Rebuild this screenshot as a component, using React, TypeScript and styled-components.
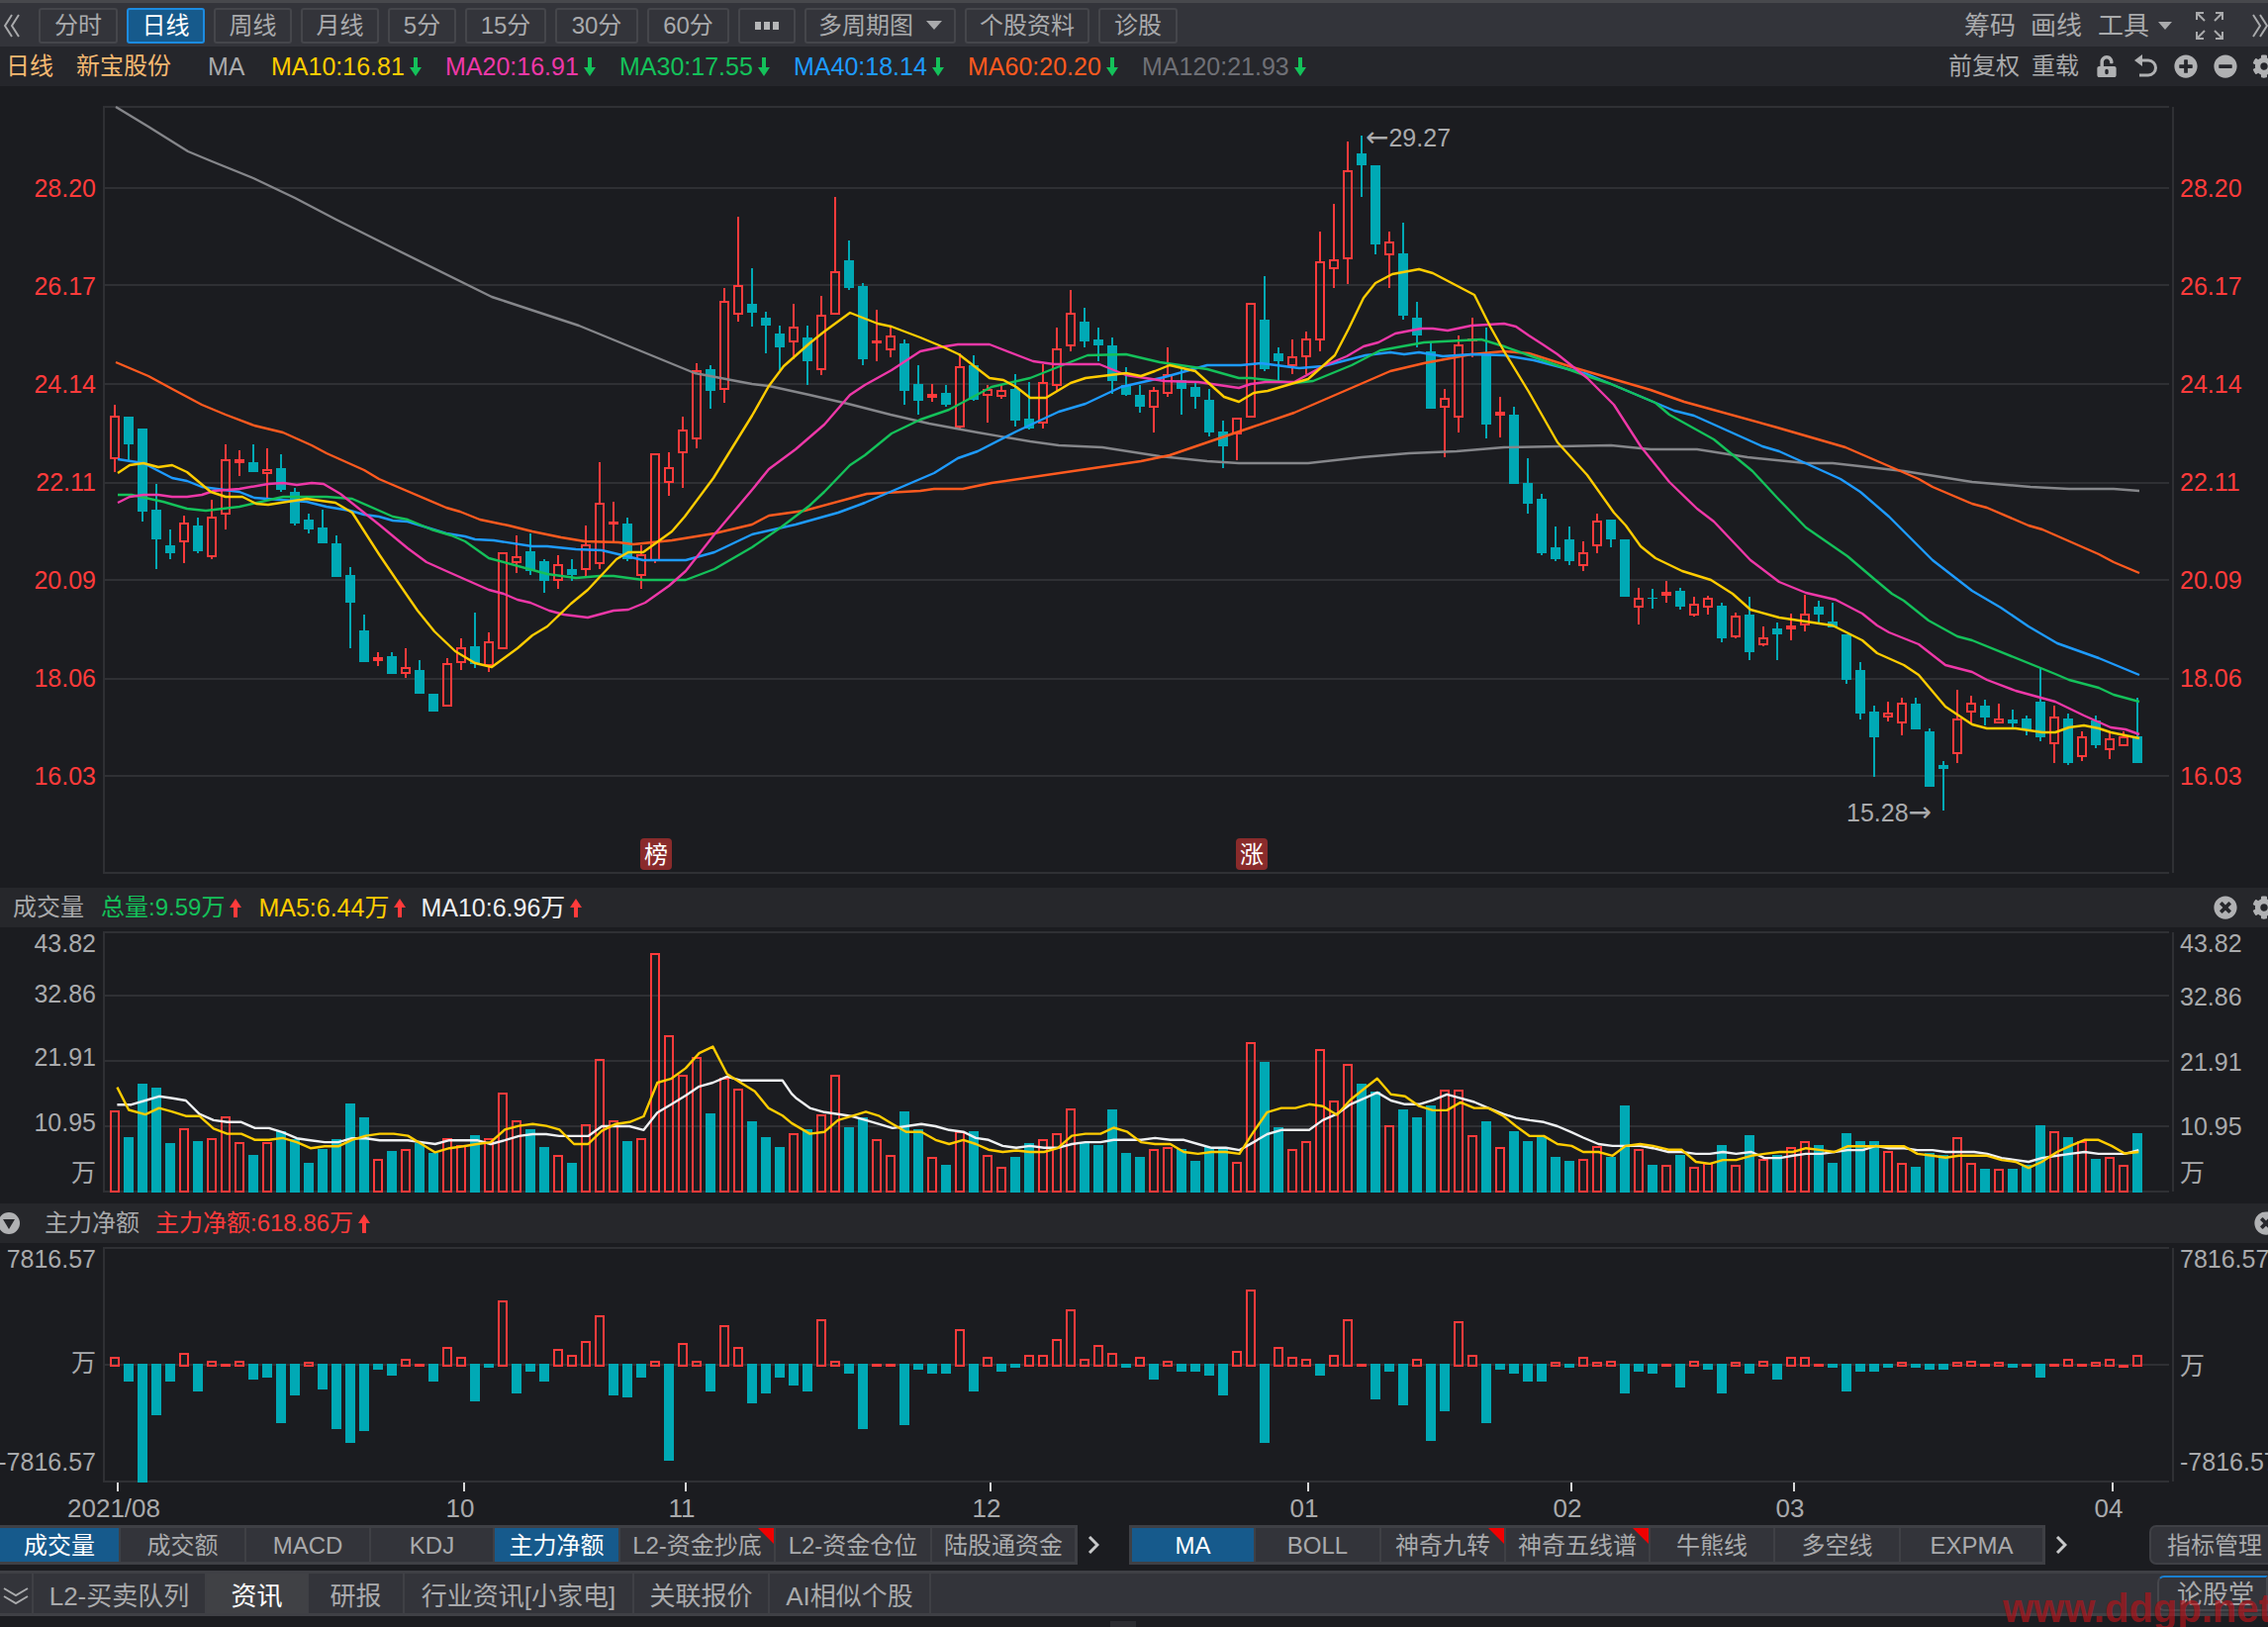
import React from "react";
import styled, { createGlobalStyle } from "styled-components";
import { FaCog, FaMinusCircle, FaPlusCircle, FaTimesCircle, FaUnlockAlt } from "react-icons/fa";

const BG = "#1b1c20";
const BAR = "#33343a";
const EDGE = "#3f4045";
const GRID = "#2f3034";
const TEXT = "#a9aaac";
const RED = "#ff3b3b";
const TEAL = "#00a9b5";
const GREEN = "#14c15a";
const YELLOW = "#ffcc00";
const FONT = `"Liberation Sans", "Noto Sans CJK SC", sans-serif`;

const GlobalStyle = createGlobalStyle`
  html, body {
    margin: 0;
    background: ${BG};
    overflow: hidden;
  }
`;

const Page = styled.div`
  position: relative;
  width: 2292px;
  height: 1644px;
  overflow: hidden;
  background: ${BG};
  color: ${TEXT};
  font-family: ${FONT};
  font-size: 24px;
  line-height: 28px;
`;

const Toolbar = styled.div`
  box-sizing: border-box;
  display: flex;
  align-items: center;
  height: 47px;
  padding: 1px 0 0 4px;
  background: ${BAR};
  border-top: 3px solid #47484c;
`;

const BackIcon = styled.svg<{ $flip?: boolean }>`
  width: 16px;
  height: 24px;
  margin-right: ${(p) => (p.$flip ? 0 : 19)}px;
  flex-shrink: 0;
`;

const ToolGroup = styled.div`
  display: flex;
  gap: 9px;
`;

const ToolButton = styled.div<{ $w: number; $active?: boolean }>`
  box-sizing: border-box;
  display: flex;
  align-items: center;
  justify-content: center;
  gap: 13px;
  width: ${(p) => p.$w}px;
  height: 36px;
  border: 2px solid ${(p) => (p.$active ? "#1c8be0" : "#45464b")};
  border-radius: 3px;
  background: ${(p) => (p.$active ? "#165a8c" : "transparent")};
  color: ${(p) => (p.$active ? "#ffffff" : TEXT)};
`;

const Caret = styled.span<{ $small?: boolean }>`
  width: 0;
  height: 0;
  border-left: ${(p) => (p.$small ? 7 : 8)}px solid transparent;
  border-right: ${(p) => (p.$small ? 7 : 8)}px solid transparent;
  border-top: ${(p) => (p.$small ? 8 : 9)}px solid ${TEXT};
`;

const Dots = styled.span`
  display: flex;
  gap: 3px;
  & > i {
    width: 6px;
    height: 8px;
    background: #b5b6b8;
  }
`;

const RightCluster = styled.div<{ $over?: number }>`
  display: flex;
  align-items: center;
  margin-left: auto;
  margin-right: ${(p) => -(p.$over || 0)}px;
`;

const ClusterItem = styled.span<{ $left: number; $large?: boolean }>`
  display: flex;
  align-items: center;
  flex-shrink: 0;
  margin-left: ${(p) => p.$left}px;
  font-size: ${(p) => (p.$large ? 26 : 24)}px;
`;

const InfoBar = styled.div`
  display: flex;
  align-items: center;
  height: 40px;
  padding-left: 6px;
  background: #25262b;
  overflow: hidden;
`;

const InfoLabel = styled.span<{ $color?: string; $w: number; $latin?: boolean }>`
  width: ${(p) => p.$w}px;
  flex-shrink: 0;
  color: ${(p) => p.$color || TEXT};
  font-size: ${(p) => (p.$latin ? 25 : 24)}px;
`;

const MaItem = styled.span<{ $color: string }>`
  display: flex;
  align-items: center;
  gap: 5px;
  width: 176px;
  flex-shrink: 0;
  font-size: 25px;
  color: ${(p) => p.$color};
`;

const ArrowIcon = styled.svg`
  width: 12px;
  height: 19px;
  flex-shrink: 0;
`;

const Panel = styled.div<{ $h: number }>`
  display: grid;
  grid-template-columns: 104px 2096px 92px;
  height: ${(p) => p.$h}px;
`;

const ChartSvg = styled.svg`
  display: block;
  font-family: ${FONT};
`;

const Axis = styled.div<{ $top: number; $left?: boolean; $red?: boolean }>`
  display: flex;
  flex-direction: column;
  align-items: ${(p) => (p.$left ? "flex-end" : "flex-start")};
  padding-top: ${(p) => p.$top}px;
  padding-right: ${(p) => (p.$left ? 7 : 0)}px;
  padding-left: ${(p) => (p.$left ? 0 : 3)}px;
  font-size: 25px;
  color: ${(p) => (p.$red ? RED : TEXT)};
  white-space: nowrap;
`;

const Tick = styled.div<{ $h: number }>`
  height: ${(p) => p.$h}px;
`;

const SubHeader = styled.div`
  display: flex;
  align-items: center;
  height: 40px;
  background: #26272b;
  overflow: hidden;
`;

const SubTitle = styled.span<{ $left: number }>`
  margin-left: ${(p) => p.$left}px;
  flex-shrink: 0;
`;

const Legend = styled.span<{ $color: string; $left: number; $latin?: boolean }>`
  display: flex;
  align-items: center;
  gap: 5px;
  flex-shrink: 0;
  margin-left: ${(p) => p.$left}px;
  font-size: ${(p) => (p.$latin ? 25 : 24)}px;
  color: ${(p) => p.$color};
`;

const CircleIcon = styled.svg`
  width: 22px;
  height: 22px;
  margin-left: -2px;
  flex-shrink: 0;
`;

const DateAxis = styled.div`
  display: flex;
  height: 43px;
  padding-left: 118px;
  font-size: 26px;
`;

const DateCell = styled.div<{ $w: number }>`
  flex: 0 0 ${(p) => p.$w}px;
  &::before {
    content: "";
    display: block;
    width: 2px;
    height: 9px;
    background: #d8d8d8;
  }
`;

const DateLabel = styled.span`
  display: inline-block;
  margin-top: 3px;
  white-space: nowrap;
  transform: translateX(calc(-50% - 3px));
`;

const TabRow = styled.div`
  display: flex;
  align-items: stretch;
  height: 40px;
  margin-bottom: 6px;
`;

const TabGroup = styled.div<{ $first?: boolean }>`
  display: flex;
  flex-shrink: 0;
  border: 3px solid ${EDGE};
  ${(p) => (p.$first ? "border-left: none;" : "margin-left: 30px;")}
`;

const Tab = styled.div<{ $w: number; $active?: boolean; $flag?: boolean }>`
  position: relative;
  box-sizing: border-box;
  display: flex;
  align-items: center;
  justify-content: center;
  width: ${(p) => p.$w}px;
  padding-top: 2px;
  background: ${(p) => (p.$active ? "#165a8c" : BAR)};
  color: ${(p) => (p.$active ? "#ffffff" : TEXT)};
  border-right: 2px solid ${EDGE};
  white-space: nowrap;
  &:last-child {
    border-right: none;
  }
  ${(p) =>
    p.$flag &&
    `&::after {
      content: "";
      position: absolute;
      top: 0;
      right: 0;
      width: 16px;
      height: 16px;
      background: #f00000;
      clip-path: polygon(0 0, 100% 0, 100% 100%);
    }`}
`;

const ChevronIcon = styled.svg`
  align-self: center;
  width: 12px;
  height: 18px;
  margin-left: 10px;
  flex-shrink: 0;
`;

const ManageButton = styled.div`
  box-sizing: border-box;
  display: flex;
  align-items: center;
  width: 130px;
  margin-left: 83px;
  padding: 2px 0 0 16px;
  flex-shrink: 0;
  background: ${BAR};
  border: 2px solid ${EDGE};
  border-radius: 7px 0 0 7px;
`;

const BottomBar = styled.div`
  box-sizing: border-box;
  display: flex;
  align-items: stretch;
  height: 46px;
  background: ${BAR};
  border-top: 3px solid ${EDGE};
  border-bottom: 3px solid ${EDGE};
  font-size: 26px;
`;

const BottomTab = styled.div<{ $w: number; $active?: boolean }>`
  box-sizing: border-box;
  display: flex;
  align-items: center;
  justify-content: center;
  width: ${(p) => p.$w}px;
  padding-top: 5px;
  background: ${(p) => (p.$active ? "#404145" : "transparent")};
  color: ${(p) => (p.$active ? "#ffffff" : TEXT)};
  border-right: 2px solid ${EDGE};
  white-space: nowrap;
`;

const CollapseIcon = styled.svg`
  width: 26px;
  height: 20px;
`;

const ForumButton = styled.div`
  box-sizing: border-box;
  display: flex;
  align-items: center;
  align-self: center;
  width: 112px;
  height: 36px;
  margin-left: auto;
  padding: 2px 0 0 18px;
  flex-shrink: 0;
  border: 2px solid #46474c;
  border-top-color: #1a7fd0;
  border-radius: 7px 0 0 7px;
`;

const Footer = styled.div`
  display: flex;
  height: 11px;
  padding: 5px 0 0 1122px;
  box-sizing: border-box;
  & > i {
    width: 26px;
    background: #2b2c30;
  }
`;

const Watermark = styled.div`
  position: absolute;
  left: 2024px;
  top: 1603px;
  font-family: "Liberation Sans", sans-serif;
  font-size: 40px;
  line-height: 44px;
  font-weight: 700;
  color: rgba(176, 20, 26, 0.7);
  white-space: nowrap;
`;

// candles: [up, bodyTop, bodyBottom, wickTop, wickBottom], read off crops at the given scale
type Bar = number[];

const scaleBars = (rows: Bar[], y0: number, sy: number): Bar[] =>
  rows.map(([up, ...ys]) => [up, ...ys.map((y) => Math.round(y0 + y / sy))]);

const CANDLES: Bar[] = [
  ...scaleBars(
    [
      [1, 119, 252, 88, 290], [0, 124, 207, 124, 255], [0, 160, 411, 160, 440], [0, 406, 495, 328, 585],
      [0, 514, 537, 465, 555], [1, 443, 505, 424, 566], [0, 454, 531, 430, 537], [1, 425, 548, 376, 554],
      [1, 251, 421, 208, 465], [1, 251, 265, 226, 303], [0, 262, 290, 208, 290], [1, 281, 296, 220, 370],
      [0, 280, 345, 238, 351], [0, 352, 447, 340, 452], [0, 436, 465, 418, 476], [0, 460, 507, 406, 507],
      [0, 508, 609, 484, 609], [0, 604, 687, 580, 825], [0, 772, 867, 724, 867], [1, 851, 865, 838, 878],
      [0, 850, 903, 838, 903], [1, 881, 902, 826, 914], [0, 892, 963, 862, 963], [0, 964, 1017, 964, 1017],
      [1, 869, 1003, 856, 1003], [1, 821, 871, 796, 890], [0, 820, 873, 718, 885], [1, 803, 880, 778, 896],
      [1, 533, 829, 533, 829], [1, 545, 566, 484, 596], [0, 532, 590, 476, 602], [0, 562, 621, 556, 656],
      [1, 569, 620, 544, 644], [0, 586, 603, 556, 620], [1, 509, 589, 454, 608], [1, 383, 571, 262, 584],
      [1, 440, 443, 382, 502], [0, 448, 555, 430, 560], [1, 539, 607, 512, 644], [1, 233, 560, 233, 566],
      [1, 275, 325, 232, 362], [1, 161, 235, 124, 338],
    ],
    380,
    3,
  ),
  [1, 374, 444, 367, 453],
  [0, 373, 395, 369, 413],
  [1, 304, 394, 291, 407],
  [1, 288, 318, 219, 325],
  [0, 307, 316, 271, 330],
  ...scaleBars(
    [
      [0, 433, 449, 421, 503], [0, 465, 492, 449, 538], [1, 451, 483, 406, 515], [0, 472, 519, 449, 566],
      [1, 427, 538, 390, 546], [1, 341, 427, 195, 427], [0, 320, 374, 280, 378], [0, 370, 515, 364, 527],
      [1, 478, 482, 418, 519], [1, 469, 498, 453, 511], [0, 484, 578, 476, 606], [0, 564, 598, 527, 625],
      [1, 584, 592, 564, 600], [0, 582, 606, 566, 610], [1, 529, 650, 504, 652], [0, 527, 596, 508, 598],
      [1, 575, 588, 566, 640], [1, 576, 589, 566, 594], [0, 574, 637, 544, 648], [0, 633, 653, 560, 655],
      [1, 561, 643, 525, 652], [1, 494, 568, 453, 580], [1, 423, 490, 379, 500], [0, 441, 480, 414, 492],
      [0, 476, 488, 453, 519], [0, 488, 558, 472, 585], [0, 567, 586, 531, 588], [0, 586, 610, 566, 621],
      [1, 576, 611, 570, 660], [1, 545, 585, 492, 590], [0, 556, 574, 533, 625], [0, 570, 590, 562, 613],
      [0, 595, 661, 574, 668], [0, 658, 688, 637, 731], [1, 631, 664, 631, 715], [1, 404, 631, 404, 631],
      [0, 437, 535, 351, 539], [0, 504, 519, 492, 556], [1, 510, 529, 476, 545], [1, 474, 511, 461, 545],
      [1, 321, 478, 262, 500], [1, 317, 338, 207, 374], [1, 141, 317, 84, 367], [0, 108, 131, 73, 194],
      [0, 131, 288, 131, 307], [1, 282, 310, 262, 374], [0, 305, 429, 245, 437], [0, 433, 468, 402, 492],
      [0, 500, 613, 482, 613], [1, 592, 611, 574, 710], [1, 486, 631, 468, 660], [1, 474, 478, 433, 511],
      [0, 502, 644, 453, 672], [1, 619, 627, 590, 670],
    ],
    100,
    1.96,
  ),
  ...scaleBars(
    [
      [0, 311, 493, 290, 493], [0, 490, 545, 427, 571], [0, 532, 678, 520, 681], [0, 662, 693, 605, 698],
      [0, 641, 697, 605, 708], [1, 674, 711, 645, 723], [1, 590, 658, 573, 676], [0, 589, 639, 589, 660],
      [0, 641, 791, 641, 791], [1, 794, 821, 767, 864], [0, 795, 798, 771, 823], [1, 778, 790, 750, 807],
      [0, 777, 818, 767, 827], [1, 810, 842, 793, 844], [1, 795, 821, 788, 838], [0, 814, 902, 808, 911],
      [1, 841, 900, 834, 902], [0, 840, 938, 793, 958], [1, 898, 921, 870, 922], [0, 876, 890, 860, 958],
      [1, 867, 879, 835, 906], [1, 836, 868, 787, 884], [0, 819, 838, 802, 860], [0, 856, 874, 808, 874],
      [0, 892, 1011, 892, 1021], [0, 986, 1100, 965, 1115], [0, 1096, 1163, 1080, 1266], [1, 1098, 1110, 1070, 1120],
      [1, 1071, 1125, 1058, 1157], [0, 1075, 1141, 1058, 1141], [0, 1148, 1293, 1138, 1293], [0, 1237, 1247, 1226, 1356],
      [1, 1113, 1208, 1038, 1230], [1, 1071, 1098, 1054, 1125], [0, 1080, 1110, 1064, 1132], [1, 1113, 1125, 1075, 1125],
      [0, 1116, 1126, 1090, 1140], [0, 1112, 1145, 1106, 1158], [0, 1070, 1162, 976, 1172], [1, 1107, 1182, 1080, 1230],
      [0, 1112, 1230, 1100, 1235], [1, 1160, 1214, 1148, 1225], [0, 1118, 1183, 1105, 1192], [1, 1165, 1198, 1152, 1220],
      [1, 1160, 1187, 1146, 1187], [0, 1159, 1230, 1058, 1230],
    ],
    300,
    2.613,
  ),
];

const MA120 = "117,108 150,128 190,153 214,163 256,180 298,200 340,222 400,252 497,300 585,329 702,377 760,388 777,390 818,399 857,408 900,419 939,428 988,437 1041,446 1070,450 1114,452 1172,461 1220,466 1252,468 1322,468 1376,462 1424,458 1472,456 1520,452 1628,450 1668,454 1715,454 1766,462 1825,468 1852,468 1924,476 1993,487 2052,492 2091,494 2136,494 2162,496";
const MA60 = "117,366 150,380 174,393 204,409 228,419 257,430 286,437 315,450 330,458 368,475 383,484 451,513 465,517 485,525 514,531 538,537 567,543 591,547 625,548 640,550 679,546 722,539 760,530 777,521 813,516 876,499 930,496 944,494 973,494 1002,488 1153,466 1182,460 1264,432 1308,417 1405,375 1439,367 1487,358 1520,355 1545,357 1589,371 1668,394 1702,406 1796,432 1865,452 1939,484 1953,492 1993,509 2008,513 2050,531 2064,535 2121,560 2136,568 2162,579";
const MA40 = "119,464 145,468 174,483 189,486 204,492 242,497 257,503 310,507 330,512 354,516 368,520 383,522 397,526 412,527 451,539 470,542 480,545 499,546 538,552 553,552 582,555 608,556 650,566 693,566 722,558 760,540 804,530 847,518 874,508 944,478 968,463 988,456 1027,436 1070,416 1097,408 1133,391 1177,381 1220,369 1254,369 1274,367 1313,372 1337,370 1380,359 1405,356 1419,358 1434,356 1458,360 1487,358 1520,359 1550,364 1604,378 1628,388 1673,407 1692,415 1712,420 1781,451 1798,456 1860,484 1880,497 1909,522 1953,566 1993,597 2022,614 2050,633 2079,650 2121,665 2162,682";
const MA30 = "119,500 133,500 165,507 189,514 208,516 242,512 286,502 330,502 356,504 397,522 412,525 436,535 456,541 470,547 494,564 553,580 582,584 606,582 620,582 650,586 693,586 722,575 760,553 789,533 818,511 833,497 859,470 874,460 901,438 930,424 959,414 1002,391 1041,382 1099,359 1138,358 1172,366 1220,373 1252,382 1264,382 1308,387 1327,385 1366,369 1395,354 1439,346 1497,343 1520,350 1545,359 1604,380 1628,388 1673,407 1687,419 1732,444 1771,476 1796,503 1825,533 1867,562 1894,585 1912,600 1924,607 1949,627 1978,643 1993,647 2077,681 2091,687 2121,695 2136,702 2162,709";
const MA20 = "119,508 131,502 145,500 160,500 174,502 189,502 204,500 216,496 242,494 271,489 286,488 300,490 315,488 327,489 344,499 383,530 412,554 431,568 451,577 494,596 509,600 523,606 536,609 555,617 570,621 594,624 620,617 635,616 652,609 676,592 693,577 722,540 760,495 777,474 804,454 833,429 859,399 874,389 901,374 930,355 949,351 968,348 1000,348 1044,365 1065,368 1111,368 1138,379 1177,385 1211,386 1252,392 1264,388 1279,386 1308,386 1337,370 1361,360 1378,350 1393,346 1410,337 1436,332 1448,332 1463,334 1487,329 1520,327 1532,330 1545,339 1559,348 1574,358 1604,382 1631,409 1658,451 1687,487 1715,514 1732,527 1769,566 1798,588 1825,599 1855,606 1882,620 1897,632 1909,639 1939,651 1966,672 1993,679 2008,687 2037,698 2077,709 2106,723 2133,735 2148,737 2162,742";
const MA10 = "119,478 131,470 145,468 160,472 174,470 189,477 213,497 228,502 245,502 259,509 271,510 310,504 339,508 356,518 383,560 402,588 422,617 439,638 460,658 480,670 497,674 523,655 538,642 553,633 577,610 594,596 623,565 635,558 650,558 679,537 692,522 721,483 760,420 777,390 792,370 818,347 833,335 859,316 887,327 901,330 930,341 954,351 969,358 1000,382 1014,384 1027,391 1041,402 1057,402 1082,387 1097,382 1138,377 1153,380 1167,375 1182,369 1208,375 1237,401 1252,406 1267,397 1281,395 1308,387 1322,383 1349,359 1363,332 1378,301 1390,286 1407,277 1434,272 1448,276 1490,298 1506,330 1520,355 1545,396 1574,447 1604,480 1631,518 1643,531 1658,552 1673,564 1700,577 1729,586 1751,600 1769,616 1798,624 1852,632 1882,647 1897,660 1924,672 1939,682 1966,714 1993,732 2008,736 2037,736 2064,740 2077,740 2091,735 2106,733 2121,736 2133,740 2162,746";

const LOWER_Y = (y: number) => 890 + y / 2.613;

const VOLUME = (
  "1 606,0 678,0 536,0 546,0 693,1 653,0 687,1 679,1 621,1 689,0 724,1 689,0 661,0 682,0 745,0 708,0 682,0 588,0 625,1 735," +
  "0 713,1 709,0 692,0 719,1 679,1 698,0 672,1 679,1 559,1 632,0 656,0 703,1 725,0 745,1 642,1 470,1 632,0 687,1 679,1 192," +
  "1 407,1 511,1 464,0 614,1 520,1 548,0 635,0 677,0 703,1 667,0 656,1 616,1 511,0 651,0 625,1 683,1 725,0 609,0 656,1 730," +
  "0 750,1 662,0 661,1 725,1 756,0 729,0 693,1 683,1 667,1 600,0 693,0 698,0 604,0 719,0 729,1 709,1 704,0 708,0 740,0 703," +
  "0 703,1 741,1 427,0 478,0 651,1 709,1 688,1 443,1 579,1 484,0 536,0 557,1 646,0 604,0 625,0 593,1 552,1 552,1 672,0 635," +
  "1 704,0 661,0 687,0 677,0 729,0 740,1 735,1 699,0 729,0 593,1 709,0 750,1 751,0 724,1 756,1 746,0 698,1 751,0 672,1 735," +
  "0 724,1 704,1 688,0 698,0 745,0 666,0 687,0 687,1 714,1 746,0 755,0 719,0 724,1 678,1 746,0 760,1 761,0 760,0 750,0 645," +
  "1 662,0 677,1 688,0 734,1 730,1 751,0 666"
)
  .split(",")
  .map((s) => s.split(" ").map(Number));

const NET_FLOW = (
  "1 1256,0 1322,0 1591,0 1411,0 1322,1 1246,0 1348,1 1267,1 1276,1 1267,0 1317,0 1312,0 1432,0 1359,1 1271,0 1343,0 1448,0 1484,0 1453,0 1291," +
  "0 1307,1 1262,1 1276,0 1322,1 1230,1 1256,0 1375,0 1285,1 1109,0 1354,0 1296,0 1322,1 1235,1 1251,1 1214,1 1147,0 1359,0 1364,0 1312,1 1267," +
  "0 1531,1 1220,1 1267,0 1348,1 1172,1 1230,0 1380,0 1354,0 1312,0 1333,0 1348,1 1157,1 1267,0 1301,0 1448,1 1276,1 1276,0 1437,0 1291,0 1301," +
  "0 1301,1 1183,0 1348,1 1256,0 1296,0 1286,1 1251,1 1251,1 1209,1 1131,1 1262,1 1225,1 1246,0 1286,1 1256,0 1317,1 1267,0 1296,0 1296,0 1307," +
  "0 1359,1 1241,1 1079,0 1484,1 1230,1 1256,1 1262,0 1307,1 1251,1 1157,1 1276,0 1369,0 1296,0 1385,1 1262,0 1479,0 1401,1 1162,1 1251,0 1432," +
  "0 1291,0 1301,0 1322,0 1322,1 1271,0 1286,1 1256,1 1271,1 1267,0 1354,0 1296,0 1301,1 1276,0 1338,1 1267,0 1291,0 1354,1 1271,0 1301,1 1267," +
  "0 1317,1 1256,1 1256,1 1276,0 1286,0 1348,0 1296,0 1296,0 1286,1 1271,0 1286,0 1291,0 1291,1 1271,1 1267,1 1276,1 1271,0 1286,1 1276,0 1312," +
  "1 1276,1 1262,1 1276,1 1271,1 1262,1 1277,1 1251"
)
  .split(",")
  .map((s) => s.split(" ").map(Number));

const trace = (pts: number[][], x0: number, sx: number) =>
  pts.map(([x, y]) => `${(x0 + x / sx).toFixed(1)},${LOWER_Y(y).toFixed(1)}`).join(" ");

const pairs = (s: string) => s.split(" ").map((p) => p.split(",").map(Number));

const VOL_MA5 = [
  trace(pairs("232,545 255,605 288,617 315,600 340,609 368,621 395,621 423,654 450,668 478,668 505,684 533,684 560,679 588,690 615,706 643,701 670,701 697,684 725,673 752,668 780,668 808,673 835,695 862,717 890,706 918,701 945,695 972,690 1000,657 1028,647 1055,642 1082,647 1108,657 1137,695 1165,695 1192,660 1220,642 1247,637 1275,622 1302,533 1330,522 1358,495 1385,455 1412,438 1440,510 1467,533 1495,556 1522,600 1550,620 1568,640"), 0, 1.96),
  trace(pairs("36,668 65,663 92,632 120,621 147,610 172,620 200,642 227,663 257,663 285,684 312,695 340,684 365,695 390,710 418,716 445,712 472,716 500,716 527,706 555,673 582,668 612,668 638,652 665,663 692,690 720,695 750,695 777,716 805,721 832,716 860,716 887,721 915,663 942,611 970,600 998,600 1025,590 1052,595 1080,618 1107,578 1135,548 1160,522 1187,564 1215,569 1243,595 1270,606 1298,606 1325,585 1352,600 1380,600 1410,621 1435,648 1462,674 1490,674 1517,695 1545,700 1568,716"), 800, 1.96),
  trace(pairs("35,716 67,726 97,700 130,695 160,700 195,710 225,710 258,742 290,747 320,737 350,737 385,726 415,721 450,716 480,716 510,706 545,711 575,716 605,701 640,701 670,701 700,701 735,701 765,721 800,726 830,731 860,726 895,726 925,726 958,737 990,742 1020,758 1050,742 1085,716 1115,700 1148,684 1180,684 1210,700 1240,720 1272,716"), 1600, 2.266),
].join(" ");

const VOL_MA10 = [
  trace(pairs("232,591 260,591 288,580 315,569 342,574 368,580 395,616 423,632 450,637 478,637 505,653 533,653 560,664 588,680 615,685 643,690 670,690 697,680 725,680 752,685 780,685 808,685 835,690 862,695 890,685 918,685 945,685 972,695 1000,685 1028,674 1055,669 1082,669 1108,674 1137,674 1165,674 1192,648 1220,648 1247,648 1275,658 1302,612 1330,590 1358,567 1385,543 1412,533 1440,517 1467,527 1495,527 1522,527 1550,527 1568,562"), 0, 1.96),
  trace(pairs("10,575 36,600 65,611 92,616 120,622 147,632 172,642 200,653 227,648 257,642 285,648 312,658 340,663 365,679 390,684 418,700 445,705 472,700 500,705 527,705 555,695 582,690 612,690 638,684 665,684 692,684 720,679 750,684 777,684 805,695 832,705 860,705 887,711 915,690 942,669 970,658 998,658 1025,658 1052,632 1080,616 1107,590 1135,574 1160,559 1187,580 1215,590 1243,590 1270,579 1298,564 1325,574 1352,584 1380,600 1410,616 1435,626 1462,632 1490,637 1517,648 1545,664 1568,678"), 800, 1.96),
  trace(pairs("35,695 67,700 97,700 130,700 160,706 195,716 225,716 258,721 290,721 320,716 350,721 385,716 415,732 450,732 480,726 510,721 545,721 575,716 605,711 640,711 670,700 700,706 735,706 765,711 800,711 830,716 860,716 895,716 925,721 958,732 990,737 1020,742 1050,732 1085,726 1115,721 1148,716 1180,721 1210,721 1240,721 1272,711"), 1600, 2.266),
].join(" ");

const barX = (i: number) => 116 + 14 * i;

// hollow red when up, filled teal when down
function BarShape({ up, cx, top, bottom }: { up: boolean; cx: number; top: number; bottom: number }) {
  return up ? (
    <rect x={cx - 4} y={top + 1} width={8} height={Math.max(bottom - top - 2, 1)} fill="none" stroke={RED} strokeWidth={2} />
  ) : (
    <rect x={cx - 5} y={top} width={10} height={Math.max(bottom - top, 1)} fill={TEAL} />
  );
}

function GridLines({ ys, top, bottom }: { ys: number[]; top: number; bottom: number }) {
  return (
    <g stroke={GRID} strokeWidth={2}>
      {ys.map((y) => (
        <line key={y} x1={104} y1={y} x2={2192} y2={y} />
      ))}
      <line x1={105} y1={top} x2={105} y2={bottom} />
      <line x1={2196} y1={top} x2={2196} y2={bottom} />
    </g>
  );
}

function MaLines({ items }: { items: [string, string][] }) {
  return (
    <g fill="none" strokeWidth={2.4} strokeLinejoin="round">
      {items.map(([points, color]) => (
        <polyline key={color} points={points} stroke={color} />
      ))}
    </g>
  );
}

function PriceChart() {
  return (
    <ChartSvg width={2096} height={810} viewBox="104 87 2096 810">
      <GridLines ys={[108, 190, 288, 388, 488, 586, 686, 784, 882]} top={108} bottom={882} />
      <g shapeRendering="crispEdges">
        {CANDLES.map(([up, bodyTop, bodyBottom, wickTop, wickBottom], i) => {
          const cx = barX(i);
          const color = up ? RED : TEAL;
          return (
            <g key={i}>
              <rect x={cx - 1} y={wickTop} width={2} height={Math.max(bodyTop - wickTop, 0)} fill={color} />
              <rect x={cx - 1} y={bodyBottom} width={2} height={Math.max(wickBottom - bodyBottom, 0)} fill={color} />
              <BarShape up={!!up} cx={cx} top={bodyTop} bottom={bodyBottom} />
            </g>
          );
        })}
      </g>
      <MaLines
        items={[
          [MA120, "#85868a"],
          [MA60, "#ff5a1f"],
          [MA40, "#1e9bff"],
          [MA30, GREEN],
          [MA20, "#ee38a8"],
          [MA10, YELLOW],
        ]}
      />
      <text x={1380} y={148} fill={TEXT} fontSize={25}>
        <tspan fontFamily="DejaVu Sans" fontSize={28}>←</tspan>29.27
      </text>
      <text x={1866} y={830} fill={TEXT} fontSize={25}>
        15.28<tspan fontFamily="DejaVu Sans" fontSize={28}>→</tspan>
      </text>
      <Marker x={647} label="榜" />
      <Marker x={1249} label="涨" />
    </ChartSvg>
  );
}

function Marker({ x, label }: { x: number; label: string }) {
  return (
    <g>
      <rect x={x} y={847} width={32} height={32} rx={4} fill="#8a2b2b" />
      <text x={x + 16} y={872} textAnchor="middle" fill="#ffffff" fontSize={24}>{label}</text>
    </g>
  );
}

function VolumeChart() {
  return (
    <ChartSvg width={2096} height={279} viewBox="104 937 2096 279">
      <GridLines ys={[942, 1006, 1072, 1138, 1204]} top={942} bottom={1204} />
      <g shapeRendering="crispEdges">
        {VOLUME.map(([up, top], i) => (
          <BarShape key={i} up={!!up} cx={barX(i)} top={Math.round(LOWER_Y(top))} bottom={1205} />
        ))}
      </g>
      <MaLines items={[[VOL_MA10, "#eef0f2"], [VOL_MA5, YELLOW]]} />
    </ChartSvg>
  );
}

function NetFlowChart() {
  return (
    <ChartSvg width={2096} height={242} viewBox="104 1256 2096 242">
      <GridLines ys={[1261, 1379, 1497]} top={1261} bottom={1497} />
      <g shapeRendering="crispEdges">
        {NET_FLOW.map(([up, end], i) =>
          up ? (
            <BarShape key={i} up cx={barX(i)} top={Math.round(LOWER_Y(end))} bottom={1381} />
          ) : (
            <BarShape key={i} up={false} cx={barX(i)} top={1378} bottom={Math.round(LOWER_Y(end))} />
          ),
        )}
      </g>
    </ChartSvg>
  );
}

function DownArrow() {
  return (
    <ArrowIcon viewBox="0 0 12 19">
      <path d="M4 0h4v10h4l-6 9-6-9h4z" fill={GREEN} />
    </ArrowIcon>
  );
}

function UpArrow() {
  return (
    <ArrowIcon viewBox="0 0 12 19">
      <path d="M6 0l6 9H8v10H4V9H0z" fill={RED} />
    </ArrowIcon>
  );
}

function DoubleChevron({ flip }: { flip?: boolean }) {
  return (
    <BackIcon viewBox="0 0 16 24" $flip={flip}>
      <g fill="none" stroke={TEXT} strokeWidth={2} transform={flip ? "matrix(-1 0 0 1 16 0)" : undefined}>
        <polyline points="8,1 1,12 8,23" />
        <polyline points="15,1 8,12 15,23" />
      </g>
    </BackIcon>
  );
}

function Chevron() {
  return (
    <ChevronIcon viewBox="0 0 12 18">
      <polyline points="2,1 10,9 2,17" fill="none" stroke="#c8c9ca" strokeWidth={3} />
    </ChevronIcon>
  );
}

const TOOL_BUTTONS: [string, number][] = [
  ["分时", 80], ["日线", 79], ["周线", 79], ["月线", 79], ["5分", 69], ["15分", 82], ["30分", 84], ["60分", 83],
];

const MA_LEGEND: [string, string][] = [
  ["MA10:16.81", YELLOW],
  ["MA20:16.91", "#ee38a8"],
  ["MA30:17.55", GREEN],
  ["MA40:18.14", "#1e9bff"],
  ["MA60:20.20", "#ff5a1f"],
  ["MA120:21.93", "#6f7076"],
];

const INDICATOR_TABS: [string, number, boolean?, boolean?][] = [
  ["成交量", 122, true], ["成交额", 127], ["MACD", 126], ["KDJ", 125], ["主力净额", 127, true],
  ["L2-资金抄底", 157, false, true], ["L2-资金仓位", 158], ["陆股通资金", 144],
];

const OVERLAY_TABS: [string, number, boolean?, boolean?][] = [
  ["MA", 125, true], ["BOLL", 127], ["神奇九转", 126, false, true], ["神奇五线谱", 146, false, true],
  ["牛熊线", 126], ["多空线", 127], ["EXPMA", 143],
];

const NEWS_TABS: [string, number, boolean?][] = [
  ["L2-买卖队列", 175], ["资讯", 103, true], ["研报", 97], ["行业资讯[小家电]", 232], ["关联报价", 137], ["AI相似个股", 163],
];

const DATES: [string, number][] = [
  ["2021/08", 350], ["10", 224], ["11", 308], ["12", 321], ["01", 266], ["02", 225], ["03", 322], ["04", 100],
];

export default function App() {
  return (
    <Page>
      <GlobalStyle />
      <Toolbar>
        <DoubleChevron />
        <ToolGroup>
          {TOOL_BUTTONS.map(([label, w]) => (
            <ToolButton key={label} $w={w} $active={label === "日线"}>{label}</ToolButton>
          ))}
          <ToolButton $w={58}><Dots><i /><i /><i /></Dots></ToolButton>
          <ToolButton $w={153}>多周期图<Caret /></ToolButton>
          <ToolButton $w={126}>个股资料</ToolButton>
          <ToolButton $w={80}>诊股</ToolButton>
        </ToolGroup>
        <RightCluster>
          <ClusterItem $left={0} $large>筹码</ClusterItem>
          <ClusterItem $left={15} $large>画线</ClusterItem>
          <ClusterItem $left={16} $large>工具</ClusterItem>
          <ClusterItem $left={9}><Caret $small /></ClusterItem>
          <ClusterItem $left={24}>
            <svg width={28} height={28} viewBox="0 0 28 28" fill="none" stroke={TEXT} strokeWidth={2}>
              <path d="M1 8V1h7M1 1l8 8M20 1h7v7M27 1l-8 8M1 20v7h7M1 27l8-8M20 27h7v-7M27 27l-8-8" />
            </svg>
          </ClusterItem>
          <ClusterItem $left={29}><DoubleChevron flip /></ClusterItem>
        </RightCluster>
      </Toolbar>

      <InfoBar>
        <InfoLabel $w={71} $color="#f5b971">日线</InfoLabel>
        <InfoLabel $w={133} $color="#f5b971">新宝股份</InfoLabel>
        <InfoLabel $w={64} $latin>MA</InfoLabel>
        {MA_LEGEND.map(([label, color]) => (
          <MaItem key={label} $color={color}>
            {label}
            <DownArrow />
          </MaItem>
        ))}
        <RightCluster $over={8}>
          <ClusterItem $left={0}>前复权</ClusterItem>
          <ClusterItem $left={12}>重载</ClusterItem>
          <ClusterItem $left={17}><FaUnlockAlt size={22} color="#b0b1b3" /></ClusterItem>
          <ClusterItem $left={17}>
            <svg width={24} height={24} viewBox="0 0 24 24" fill="none">
              <path d="M0 6l8-6v12z" fill="#b0b1b3" />
              <path d="M7 6h7a7.5 7.5 0 0 1 0 15H5" stroke="#b0b1b3" strokeWidth={3} />
            </svg>
          </ClusterItem>
          <ClusterItem $left={16}><FaPlusCircle size={24} color="#b0b1b3" /></ClusterItem>
          <ClusterItem $left={16}><FaMinusCircle size={24} color="#b0b1b3" /></ClusterItem>
          <ClusterItem $left={15}><FaCog size={24} color="#b0b1b3" /></ClusterItem>
        </RightCluster>
      </InfoBar>

      <Panel $h={810}>
        <Axis $left $red $top={89}>
          {["28.20", "26.17", "24.14", "22.11", "20.09", "18.06", "16.03"].map((v) => (
            <Tick key={v} $h={99}>{v}</Tick>
          ))}
        </Axis>
        <PriceChart />
        <Axis $red $top={89}>
          {["28.20", "26.17", "24.14", "22.11", "20.09", "18.06", "16.03"].map((v) => (
            <Tick key={v} $h={99}>{v}</Tick>
          ))}
        </Axis>
      </Panel>

      <SubHeader>
        <SubTitle $left={13}>成交量</SubTitle>
        <Legend $color={GREEN} $left={17}>总量:9.59万<UpArrow /></Legend>
        <Legend $color={YELLOW} $left={17} $latin>MA5:6.44万<UpArrow /></Legend>
        <Legend $color="#eef0f2" $left={15} $latin>MA10:6.96万<UpArrow /></Legend>
        <RightCluster $over={8}>
          <ClusterItem $left={0}><FaTimesCircle size={24} color="#b0b1b3" /></ClusterItem>
          <ClusterItem $left={15}><FaCog size={24} color="#b0b1b3" /></ClusterItem>
        </RightCluster>
      </SubHeader>

      <Panel $h={279}>
        <Axis $left $top={2}>
          <Tick $h={51}>43.82</Tick>
          <Tick $h={64}>32.86</Tick>
          <Tick $h={66}>21.91</Tick>
          <Tick $h={51}>10.95</Tick>
          <Tick $h={28}>万</Tick>
        </Axis>
        <VolumeChart />
        <Axis $top={2}>
          <Tick $h={54}>43.82</Tick>
          <Tick $h={66}>32.86</Tick>
          <Tick $h={65}>21.91</Tick>
          <Tick $h={47}>10.95</Tick>
          <Tick $h={28}>万</Tick>
        </Axis>
      </Panel>

      <SubHeader>
        <CircleIcon viewBox="0 0 22 22">
          <circle cx={11} cy={11} r={11} fill="#b0b1b3" />
          <path d="M5 7h12l-6 10z" fill="#26272b" />
        </CircleIcon>
        <SubTitle $left={25}>主力净额</SubTitle>
        <Legend $color={RED} $left={16}>主力净额:618.86万<UpArrow /></Legend>
        <RightCluster $over={10}>
          <ClusterItem $left={0}><FaTimesCircle size={24} color="#b0b1b3" /></ClusterItem>
        </RightCluster>
      </SubHeader>

      <Panel $h={242}>
        <Axis $left $top={2}>
          <Tick $h={105}>7816.57</Tick>
          <Tick $h={100}>万</Tick>
          <Tick $h={28}>-7816.57</Tick>
        </Axis>
        <NetFlowChart />
        <Axis $top={2}>
          <Tick $h={108}>7816.57</Tick>
          <Tick $h={97}>万</Tick>
          <Tick $h={28}>-7816.57</Tick>
        </Axis>
      </Panel>

      <DateAxis>
        {DATES.map(([label, w]) => (
          <DateCell key={label} $w={w}>
            <DateLabel>{label}</DateLabel>
          </DateCell>
        ))}
      </DateAxis>

      <TabRow>
        <TabGroup $first>
          {INDICATOR_TABS.map(([label, w, active, flag]) => (
            <Tab key={label} $w={w} $active={active} $flag={flag}>{label}</Tab>
          ))}
        </TabGroup>
        <Chevron />
        <TabGroup>
          {OVERLAY_TABS.map(([label, w, active, flag]) => (
            <Tab key={label} $w={w} $active={active} $flag={flag}>{label}</Tab>
          ))}
        </TabGroup>
        <Chevron />
        <ManageButton>指标管理</ManageButton>
      </TabRow>

      <BottomBar>
        <BottomTab $w={34}>
          <CollapseIcon viewBox="0 0 26 20">
            <g fill="none" stroke={TEXT} strokeWidth={2}>
              <polyline points="1,2 13,9 25,2" />
              <polyline points="1,10 13,17 25,10" />
            </g>
          </CollapseIcon>
        </BottomTab>
        {NEWS_TABS.map(([label, w, active]) => (
          <BottomTab key={label} $w={w} $active={active}>{label}</BottomTab>
        ))}
        <ForumButton>论股堂</ForumButton>
      </BottomBar>
      <Footer><i /></Footer>
      <Watermark>www.ddgp.net</Watermark>
    </Page>
  );
}
